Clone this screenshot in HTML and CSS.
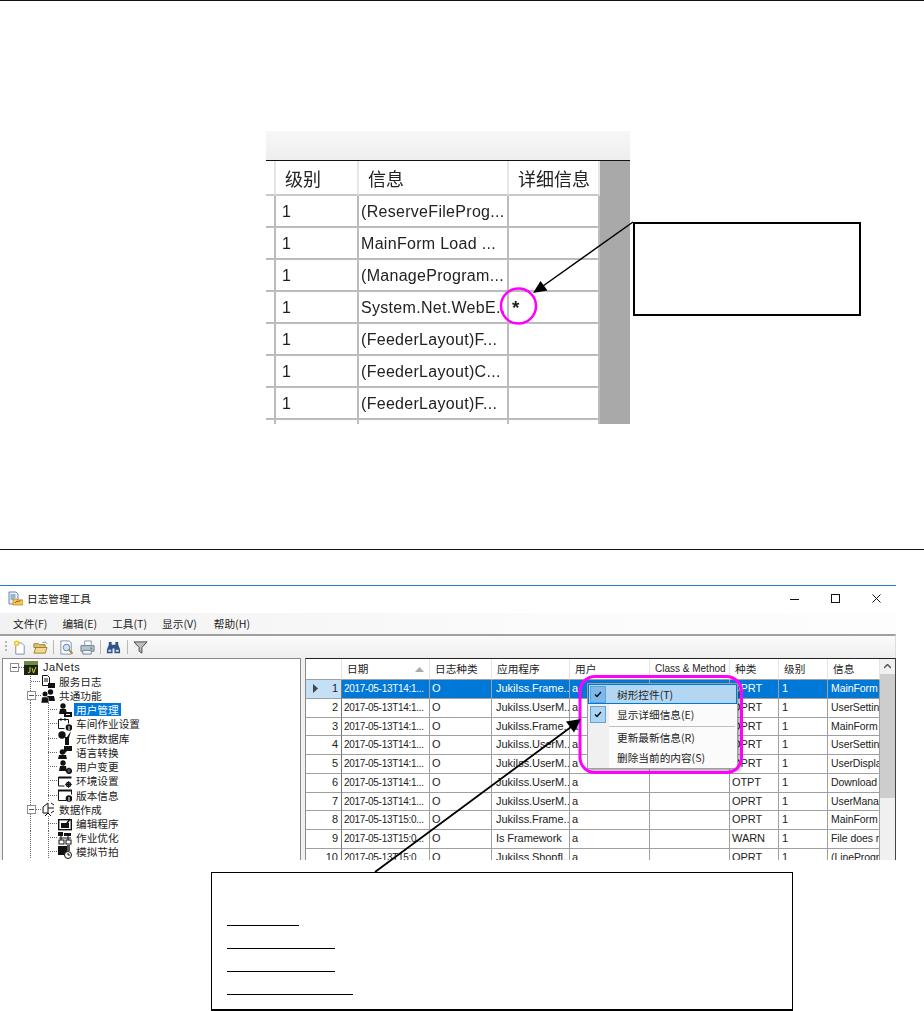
FILE: index.html
```html
<!DOCTYPE html>
<html lang="zh">
<head>
<meta charset="utf-8">
<title>日志管理工具</title>
<link rel="stylesheet" href="styles.css">
</head>
<body>
<div class="page">
  <div class="rule rule-top"></div>

  <section class="fig-row">
    <div class="shot">
      <div class="shot-band"></div>
      <div class="shot-body">
        <div class="shot-grid">
          <div class="sc hd"></div><div class="sc hd">级别</div><div class="sc hd">信息</div><div class="sc hd">详细信息</div>
          <div class="sc"></div><div class="sc">1</div><div class="sc">(ReserveFileProg...</div><div class="sc"></div>
          <div class="sc"></div><div class="sc">1</div><div class="sc">MainForm Load ...</div><div class="sc"></div>
          <div class="sc"></div><div class="sc">1</div><div class="sc">(ManageProgram...</div><div class="sc"></div>
          <div class="sc"></div><div class="sc">1</div><div class="sc">System.Net.WebE...</div><div class="sc star">*</div>
          <div class="sc"></div><div class="sc">1</div><div class="sc">(FeederLayout)F...</div><div class="sc"></div>
          <div class="sc"></div><div class="sc">1</div><div class="sc">(FeederLayout)C...</div><div class="sc"></div>
          <div class="sc"></div><div class="sc">1</div><div class="sc">(FeederLayout)F...</div><div class="sc"></div>
          <div class="sc"></div><div class="sc"></div><div class="sc"></div><div class="sc"></div>
        </div>
      </div>
    </div>
    <div class="note-box"></div>
  </section>

  <div class="rule rule-mid"></div>

  <section class="window">
    <header class="titlebar">
      <svg class="app-icon" viewBox="0 0 15 15"><path d="M1 1h7l2 2v10H1z" fill="#e8f0f8" stroke="#6d87a8"/><path d="M2.500 4h5M2.500 6h5M2.500 8h4" stroke="#4c78b0"/><path d="M5 8h4l1 1h5v5H5z" fill="#f2c94c" stroke="#a8862a" stroke-width=".7"/><path d="M7 12l2-2 1.500 1 2.500-2.500" fill="none" stroke="#d33" stroke-width="1"/></svg>
      <span class="title-text">日志管理工具</span>
      <div class="win-ctrls">
        <svg class="ctrl" viewBox="0 0 9 9"><path d="M0 5.500h9" stroke="#111" fill="none"/></svg>
        <svg class="ctrl" viewBox="0 0 9 9"><rect x=".5" y=".5" width="8" height="8" fill="none" stroke="#111"/></svg>
        <svg class="ctrl" viewBox="0 0 9 9"><path d="M.5.500l8 8M8.500.500l-8 8" stroke="#111" fill="none"/></svg>
      </div>
    </header>

    <nav class="menubar">
      <span class="mi">文件(F)</span><span class="mi">编辑(E)</span><span class="mi">工具(T)</span><span class="mi">显示(V)</span><span class="mi">帮助(H)</span>
    </nav>

    <div class="toolbar">
      <span class="grip"></span>
      <svg class="tb" viewBox="0 0 16 16"><path d="M4 3h6l3 3v9H4z" fill="#fff" stroke="#7b8ea6"/><circle cx="5" cy="3.500" r="3" fill="#f7c331"/><circle cx="5" cy="3.500" r="1.300" fill="#fdf0a8"/></svg>
      <svg class="tb" viewBox="0 0 16 16"><path d="M1 4h5l1 1h6v3H1z" fill="#e2c26c" stroke="#9a7f3a"/><path d="M1 14l2-6h12l-2 6z" fill="#f3d98d" stroke="#9a7f3a"/><path d="M10 3l3-1 2 2" fill="none" stroke="#6a8db5"/></svg>
      <span class="tb-sep"></span>
      <svg class="tb" viewBox="0 0 16 16"><path d="M2 1h9l2 2v12H2z" fill="#fff" stroke="#7b8ea6"/><circle cx="8" cy="8" r="3.500" fill="#cfe3f6" stroke="#5b7fa8"/><path d="M10.500 10.500l4 4" stroke="#b5892e" stroke-width="2"/></svg>
      <svg class="tb" viewBox="0 0 16 16"><path d="M5 1h7v5H5z" fill="#fff" stroke="#8a97a8"/><path d="M1 6h14v6H1z" fill="#b8c4d2" stroke="#6e7f93"/><path d="M3 11h9v4H3z" fill="#eef2f6" stroke="#6e7f93"/><rect x="11" y="8" width="2" height="2" fill="#35b04a"/></svg>
      <span class="tb-sep"></span>
      <svg class="tb" viewBox="0 0 16 16"><path d="M3 2h3v3h4V2h3v3l2 5v4H9V9H7v5H1v-4l2-5z" fill="#2f5384"/><path d="M2.500 10.500h3v2h-3zM10.500 10.500h3v2h-3z" fill="#cfe0f2"/></svg>
      <span class="tb-sep"></span>
      <svg class="tb" viewBox="0 0 16 16"><path d="M1 2h14L9.500 8v6l-3-2V8z" fill="#bdbdbd" stroke="#444"/></svg>
    </div>

    <div class="panes">
      <aside class="tree">
        <div class="node root"><span class="exp"></span><span class="stub s-root"></span><svg class="ti" viewBox="0 0 14 14"><rect width="14" height="14" fill="#1c2414"/><rect width="14" height="4" fill="#6f8a45"/><path d="M4 12l2-1V6M8 7l1.500 5L12 6" fill="none" stroke="#d5d845" stroke-width="1"/></svg><span class="lbl lat">JaNets</span></div>
        <div class="node l1"><span class="stub s1"></span><svg class="ti" viewBox="0 0 14 14"><path d="M1.500 1.500h5l2 2v8h-7z" fill="#fff" stroke="#111"/><path d="M3 5h4M3 7h4" stroke="#111"/><rect x="7" y="9" width="7" height="5" fill="#111"/></svg><span class="lbl">服务日志</span></div>
        <div class="node l1 open"><span class="exp"></span><span class="stub s-exp"></span><svg class="ti" viewBox="0 0 14 14"><circle cx="9.500" cy="3" r="2.700" fill="#111"/><path d="M5 12l1-5h7l1 5z" fill="#111"/><circle cx="4" cy="5" r="2.500" fill="#111"/><path d="M0 14l1-6h6l1 6z" fill="#111" stroke="#fff" stroke-width=".5"/></svg><span class="lbl">共通功能</span></div>
        <div class="node l2"><span class="stub s2"></span><svg class="ti" viewBox="0 0 14 14"><circle cx="5" cy="3" r="2.700" fill="#111"/><path d="M1 11l1-5h6l1 5z" fill="#111"/><rect x="6" y="9" width="8" height="5" fill="#111"/><path d="M8 11.500h4" stroke="#fff"/></svg><span class="lbl sel">用户管理</span></div>
        <div class="node l2"><span class="stub s2"></span><svg class="ti" viewBox="0 0 14 14"><path d="M.500 2.500h10v4M.500 2.500v9h6" fill="none" stroke="#111"/><path d="M3 1v3M7 1v3" stroke="#111"/><circle cx="11" cy="10.500" r="3.300" fill="#111"/><path d="M11 9v4" stroke="#fff"/></svg><span class="lbl">车间作业设置</span></div>
        <div class="node l2"><span class="stub s2"></span><svg class="ti" viewBox="0 0 14 14"><circle cx="4" cy="4" r="3.700" fill="#111"/><path d="M13 0L9 6H7v8h4V7z" fill="#111"/></svg><span class="lbl">元件数据库</span></div>
        <div class="node l2"><span class="stub s2"></span><svg class="ti" viewBox="0 0 14 14"><path d="M6 1h8v5H9L7 8V6H6z" fill="#111"/><circle cx="4.500" cy="7" r="2.800" fill="#111"/><path d="M0 14l1-4h7l1 4z" fill="#111"/></svg><span class="lbl">语言转换</span></div>
        <div class="node l2"><span class="stub s2"></span><svg class="ti" viewBox="0 0 14 14"><circle cx="5" cy="3" r="2.700" fill="#111"/><path d="M1 11l1-5h6l1 5z" fill="#111"/><circle cx="11" cy="11" r="2.200" fill="none" stroke="#111" stroke-width="1.600"/><path d="M11 7.500v7M7.500 11h7" stroke="#111"/></svg><span class="lbl">用户变更</span></div>
        <div class="node l2"><span class="stub s2"></span><svg class="ti" viewBox="0 0 14 14"><path d="M.500 3.500h13" stroke="#111" stroke-width="2"/><path d="M.500 3v9h6" fill="none" stroke="#111"/><circle cx="10.500" cy="10.500" r="2" fill="none" stroke="#111" stroke-width="1.500"/><path d="M10.500 7.300v6.400M7.300 10.500h6.400" stroke="#111"/></svg><span class="lbl">环境设置</span></div>
        <div class="node l2"><span class="stub s2"></span><svg class="ti" viewBox="0 0 14 14"><path d="M.500 2.500h13v4M.500 2.500v10h8" fill="none" stroke="#111"/><path d="M0 2.500h14" stroke="#111" stroke-width="2"/><circle cx="11" cy="10.500" r="3.300" fill="#111"/><path d="M11 9v4" stroke="#fff"/></svg><span class="lbl">版本信息</span></div>
        <div class="node l1 open"><span class="exp"></span><span class="stub s-exp"></span><svg class="ti" viewBox="0 0 14 14"><path d="M7 1v10H2V5z" fill="#fff" stroke="#111"/><path d="M7 6h6M10 1l3 2M10 11l3-2M4 14l3-3 3 3" fill="none" stroke="#111"/></svg><span class="lbl">数据作成</span></div>
        <div class="node l2 deep"><span class="stub s2"></span><svg class="ti" viewBox="0 0 14 14"><rect x=".7" y="2.700" width="12.600" height="10" fill="#fff" stroke="#111" stroke-width="1.400"/><rect x="3" y="6" width="8" height="5" fill="#111"/><path d="M5 7l2 2 5-7" fill="none" stroke="#111" stroke-width="1.500"/></svg><span class="lbl">编辑程序</span></div>
        <div class="node l2 deep"><span class="stub s2"></span><svg class="ti" viewBox="0 0 14 14"><rect x="0" y="1" width="5" height="4" fill="#111"/><rect x="6" y="2" width="7" height="3" fill="#111"/><path d="M1 7h12M3 5v6M10 5v6" stroke="#111"/><rect x="1" y="9" width="5" height="4" fill="#fff" stroke="#111"/><rect x="8" y="9" width="5" height="4" fill="#fff" stroke="#111"/></svg><span class="lbl">作业优化</span></div>
        <div class="node l2 deep"><span class="stub s2"></span><svg class="ti" viewBox="0 0 14 14"><path d="M0 1h9v9H0z" fill="#111"/><path d="M9 0h3v6H9z" fill="#555"/><circle cx="10" cy="10" r="3.500" fill="#fff" stroke="#111"/><path d="M10 8v2h2" fill="none" stroke="#111"/></svg><span class="lbl">模拟节拍</span></div>
      </aside>

      <div class="grid-area">
        <div class="dg">
          <div class="ch"></div><div class="ch sorted">日期<svg class="sort" viewBox="0 0 9 5"><path d="M0 5L4.500 0 9 5z" fill="#a9a9a9"/></svg></div><div class="ch">日志种类</div><div class="ch">应用程序</div><div class="ch">用户</div><div class="ch lat">Class &amp; Method</div><div class="ch">种类</div><div class="ch">级别</div><div class="ch">信息</div>

          <div class="rh cur"><svg class="cur-arrow" viewBox="0 0 5 9"><path d="M0 0l5 4.500L0 9z" fill="#444"/></svg>1</div><div class="dc s">2017-05-13T14:1...</div><div class="dc s">O</div><div class="dc s">JukiIss.Frame...</div><div class="dc s">a</div><div class="dc s"></div><div class="dc s">OPRT</div><div class="dc s">1</div><div class="dc s">MainForm S</div>
          <div class="rh">2</div><div class="dc">2017-05-13T14:1...</div><div class="dc">O</div><div class="dc">JukiIss.UserM...</div><div class="dc">a</div><div class="dc"></div><div class="dc">OPRT</div><div class="dc">1</div><div class="dc">UserSetting</div>
          <div class="rh">3</div><div class="dc">2017-05-13T14:1...</div><div class="dc">O</div><div class="dc">JukiIss.Frame...</div><div class="dc">a</div><div class="dc"></div><div class="dc">OPRT</div><div class="dc">1</div><div class="dc">MainForm</div>
          <div class="rh">4</div><div class="dc">2017-05-13T14:1...</div><div class="dc">O</div><div class="dc">JukiIss.UserM...</div><div class="dc">a</div><div class="dc"></div><div class="dc">OPRT</div><div class="dc">1</div><div class="dc">UserSetting</div>
          <div class="rh">5</div><div class="dc">2017-05-13T14:1...</div><div class="dc">O</div><div class="dc">JukiIss.UserM...</div><div class="dc">a</div><div class="dc"></div><div class="dc">OPRT</div><div class="dc">1</div><div class="dc">UserDispla</div>
          <div class="rh">6</div><div class="dc">2017-05-13T14:1...</div><div class="dc">O</div><div class="dc">JukiIss.UserM...</div><div class="dc">a</div><div class="dc"></div><div class="dc">OTPT</div><div class="dc">1</div><div class="dc">Download u</div>
          <div class="rh">7</div><div class="dc">2017-05-13T14:1...</div><div class="dc">O</div><div class="dc">JukiIss.UserM...</div><div class="dc">a</div><div class="dc"></div><div class="dc">OPRT</div><div class="dc">1</div><div class="dc">UserManage</div>
          <div class="rh">8</div><div class="dc">2017-05-13T15:0...</div><div class="dc">O</div><div class="dc">JukiIss.Frame...</div><div class="dc">a</div><div class="dc"></div><div class="dc">OPRT</div><div class="dc">1</div><div class="dc">MainForm S</div>
          <div class="rh">9</div><div class="dc">2017-05-13T15:0...</div><div class="dc">O</div><div class="dc">Is Framework</div><div class="dc">a</div><div class="dc"></div><div class="dc">WARN</div><div class="dc">1</div><div class="dc">File does n</div>
          <div class="rh">10</div><div class="dc">2017-05-13T15:0...</div><div class="dc">O</div><div class="dc">JukiIss.Shopfl...</div><div class="dc">a</div><div class="dc"></div><div class="dc">OPRT</div><div class="dc">1</div><div class="dc">(LineProgra</div>
        </div>
        <div class="vscroll">
          <div class="vbtn"><svg class="vup" viewBox="0 0 7 5"><path d="M0 4l3.500-3.500L7 4" fill="none" stroke="#555" stroke-width="1.500"/></svg></div>
          <div class="vthumb"></div>
        </div>

        <div class="ctx">
          <div class="ctx-item hot"><span class="chk"><svg viewBox="0 0 8 7"><path d="M1 3.500l2 2 4-4.500" fill="none" stroke="#111" stroke-width="1.400"/></svg></span><span class="ctx-lbl">树形控件(T)</span></div>
          <div class="ctx-item"><span class="chk"><svg viewBox="0 0 8 7"><path d="M1 3.500l2 2 4-4.500" fill="none" stroke="#111" stroke-width="1.400"/></svg></span><span class="ctx-lbl">显示详细信息(E)</span></div>
          <div class="ctx-sep"></div>
          <div class="ctx-item"><span class="chk none"></span><span class="ctx-lbl">更新最新信息(R)</span></div>
          <div class="ctx-item"><span class="chk none"></span><span class="ctx-lbl">删除当前的内容(S)</span></div>
        </div>
      </div>
    </div>
  </section>

  <section class="legend">
    <div class="u u1"></div>
    <div class="u u2"></div>
    <div class="u u2"></div>
    <div class="u u3"></div>
  </section>

  <svg class="overlay" viewBox="0 0 924 1011">
    <circle cx="518.500" cy="306" r="17.500" fill="none" stroke="#f0f" stroke-width="2.500"/>
    <path d="M633 222L543 286" stroke="#000" stroke-width="1.500" fill="none"/>
    <path d="M533 293l14.500-2.500-7-9.500z" fill="#000"/>
    <rect x="580" y="676.500" width="161.500" height="96" rx="15" fill="none" stroke="#f0f" stroke-width="3"/>
    <path d="M375 872L571 727" stroke="#000" stroke-width="1.800" fill="none"/>
    <path d="M581 719l-15 2.500 8 11z" fill="#000"/>
  </svg>
</div>
</body>
</html>
```
FILE: styles.css
```css
* { box-sizing: border-box; }
html, body { margin: 0; background: #fff; }
body { font-family: "Noto Sans CJK SC", "Liberation Sans", sans-serif; color: #111; }
.page { position: relative; width: 924px; height: 1011px; overflow: hidden; }
.rule { height: 1px; background: #111; width: 924px; }
.rule-mid { margin-top: 125px; }

/* figure 1 */
.fig-row { display: flex; align-items: flex-start; margin: 130px 0 0 266px; }
.shot { width: 364px; height: 293px; overflow: hidden; filter: blur(.35px); flex: none; }
.shot-band { height: 30px; background: linear-gradient(#f8f8f8, #eeeeee); border-bottom: 1px solid #111; }
.shot-body { height: 263px; background: #a9a9a9; overflow: hidden; }
.shot-grid { display: grid; width: 334px; grid-template-columns: 10px 83px 150px 91px; grid-template-rows: 35px repeat(8, 32px); background: #fff; }
.sc { border-right: 2px solid #bcbcbc; border-bottom: 2px solid #bcbcbc; padding-left: 2px; font: 16px/31px "Liberation Sans", sans-serif; letter-spacing: .3px; color: #222; white-space: nowrap; overflow: hidden; }
.sc:nth-child(4n+1) { padding: 0; }
.sc:nth-child(4n+2) { padding-left: 6px; }
.sc.star { padding-left: 3px; font-size: 19px; font-weight: 700; }
.sc.hd { font: 18px/30px "Noto Sans CJK SC", sans-serif; padding-top: 2px; padding-left: 9px; border-right-color: #e6e6e6; border-bottom-color: #c9c9c9; letter-spacing: 0; }
.sc.hd:first-child { padding: 0; }
.note-box { flex: none; width: 228px; height: 94px; margin: 91px 0 0 3px; border: 2px solid #000; background: #fff; position: relative; }

/* application window */
.window { width: 896px; height: 275px; margin-top: 35px; overflow: hidden; background: #f0f0f0; border-top: 1px solid #2b7bbd; font-size: 10.670px; }
.titlebar { height: 27px; background: #fff; display: flex; align-items: center; padding: 0 0 2px 8px; }
.app-icon { width: 15px; height: 15px; }
.title-text { margin-left: 4px; font-size: 10.670px; color: #111; }
.win-ctrls { margin-left: auto; display: flex; gap: 32px; padding-right: 15px; }
.ctrl { width: 9px; height: 9px; display: block; }
.menubar { height: 21px; display: flex; gap: 15px; align-items: center; padding-left: 13px; background: linear-gradient(90deg, #f2f2f2, #fbfbfb 60%, #fdfdfd); }
.mi { color: #222; }
.mi:last-child { margin-left: 2px; }
.toolbar { height: 24px; border-top: 2px solid #a0a0a0; background: linear-gradient(#fbfbfb, #eeeeee); display: flex; align-items: center; padding-left: 5px; border-right: 1px solid #ddd; }
.grip { width: 2px; height: 12px; margin-right: 5px; background: repeating-linear-gradient(#b5b5b5 0 2px, transparent 2px 4px); }
.tb { width: 15px; height: 15px; flex: none; }
.tb + .tb { margin-left: 5.500px; }
.tb-sep { width: 1px; height: 14px; flex: none; background: #b9b9b9; margin: 0 5px 0 5.500px; }
.panes { display: flex; height: 202px; }

/* tree */
.tree { width: 299px; margin-left: 2px; flex: none; background: #fff; border: 1px solid #8a8a8a; border-bottom: 0; padding-top: 1px; overflow: hidden; }
.node { height: 14.230px; display: flex; align-items: center; white-space: nowrap; --dot: repeating-linear-gradient(#666 0 1px, transparent 1px 2px); }
.root { padding-left: 7px; padding-top: 1px; }
.l1 { padding-left: 28px; background: var(--dot) 27px 0 / 1px 100% no-repeat; }
.l1.open { padding-left: 24px; }
.l2 { padding-left: 45px; background: var(--dot) 27px 0 / 1px 100% no-repeat, var(--dot) 45px 0 / 1px 100% no-repeat; }
.exp { width: 9px; height: 9px; border: 1px solid #8e8e8e; background: linear-gradient(#556 0 0) center / 5px 1px no-repeat, #fff; flex: none; }
.stub { height: 1px; flex: none; background: repeating-linear-gradient(90deg, #666 0 1px, transparent 1px 2px); }
.s-root { width: 5px; }
.s-exp { width: 5px; }
.s1 { width: 10px; }
.s2 { width: 10px; }
.ti { width: 14px; height: 14px; flex: none; }
.lbl { margin-left: 3px; color: #222; line-height: 13px; padding: 0 1px; }
.lbl.lat { font-family: "Liberation Sans", sans-serif; font-size: 11px; letter-spacing: .5px; margin-left: 5px; padding: 0; }
.lbl.sel { background: #0078d7; color: #fff; margin-left: 2px; padding: 0 2px; }

/* data grid */
.grid-area { position: relative; display: flex; margin-left: 4px; height: 202px; width: 591px; border-top: 1px solid #222; border-left: 1px solid #8a8a8a; border-right: 1px solid #444; background: #fff; }
.dg { width: 574px; height: 201px; display: grid; grid-template-columns: 36px 88px 62px 78px 80px 80px 49px 49px 52px; grid-template-rows: 21px repeat(10, 18.750px); overflow: hidden; }
.ch { border-right: 1px solid #e4e4e4; border-bottom: 1px solid #a0a0a0; padding: 0 5px; line-height: 20px; color: #222; display: flex; align-items: center; justify-content: space-between; white-space: nowrap; overflow: hidden; }
.ch:nth-child(3), .ch:nth-child(4), .ch:nth-child(5), .ch:nth-child(7), .ch:nth-child(8), .ch:nth-child(9) { justify-content: flex-start; }
.ch.lat { font-family: "Liberation Sans", sans-serif; font-size: 10px; justify-content: flex-start; }
.sort { width: 9px; height: 5px; flex: none; }
.rh { border-right: 1px solid #777; border-bottom: 1px solid #a0a0a0; font: 11px/17px "Liberation Sans", sans-serif; color: #222; text-align: right; padding-right: 3px; position: relative; }
.rh.cur { background: #c4e0f7; }
.cur-arrow { position: absolute; left: 7px; top: 4px; width: 5px; height: 9px; }
.dc { border-right: 1px solid #a0a0a0; border-bottom: 1px solid #a0a0a0; padding-left: 2px; font: 11px/17px "Liberation Sans", sans-serif; letter-spacing: -.08px; color: #222; white-space: nowrap; overflow: hidden; }
.dc:nth-child(9n+2) { font-size: 10px; letter-spacing: -.3px; }
.dc:nth-child(9n+4) { padding-left: 4px; }
.dc:nth-child(9n+8) { padding-left: 3px; }
.dc:nth-child(9n) { padding-left: 3px; font-size: 10.500px; }
.dc.s { background: #0078d7; color: #fff; }
.vscroll { width: 15px; background: #f0f0f0; display: flex; flex-direction: column; flex: none; }
.vbtn { height: 15px; display: flex; align-items: center; justify-content: center; }
.vup { width: 7px; height: 5px; }
.vthumb { height: 124px; background: #cdcdcd; }

/* context menu */
.ctx { position: absolute; left: 281px; top: 24px; width: 151px; height: 86px; background: linear-gradient(90deg, #f0f0f0 0 21px, #fbfbfb 21px); border: 1px solid #a0a0a0; box-shadow: 2px 2px 3px rgba(0,0,0,.35); color: #222; }
.ctx-item { height: 20px; display: flex; align-items: center; padding-left: 2px; }
.ctx-item.hot { background: #b3d7f3; outline: 1px solid #0078d7; outline-offset: -1px; }
.chk { width: 16px; height: 17px; background: #aed4f4; border: 1px solid #5ea3dc; display: flex; align-items: center; justify-content: center; flex: none; }
.hot .chk { background: #7fb8ea; }
.chk svg { width: 8px; height: 7px; }
.chk.none { background: none; border: 0; }
.ctx-lbl { margin-left: 11px; white-space: nowrap; }
.ctx-sep { height: 1px; background: #c0c0c0; margin: 2px 2px 0 21px; }

/* bottom note */
.legend { width: 582px; height: 139px; margin: 12px 0 0 211px; border: 1px solid #000; border-bottom-width: 2px; background: #fff; padding: 52px 0 0 15px; display: flex; flex-direction: column; gap: 22px; }
.u { height: 1px; background: #000; flex: none; }
.u1 { width: 72px; }
.u2 { width: 108px; }
.u3 { width: 126px; }

.overlay { position: absolute; left: 0; top: 0; width: 924px; height: 1011px; pointer-events: none; }
```
